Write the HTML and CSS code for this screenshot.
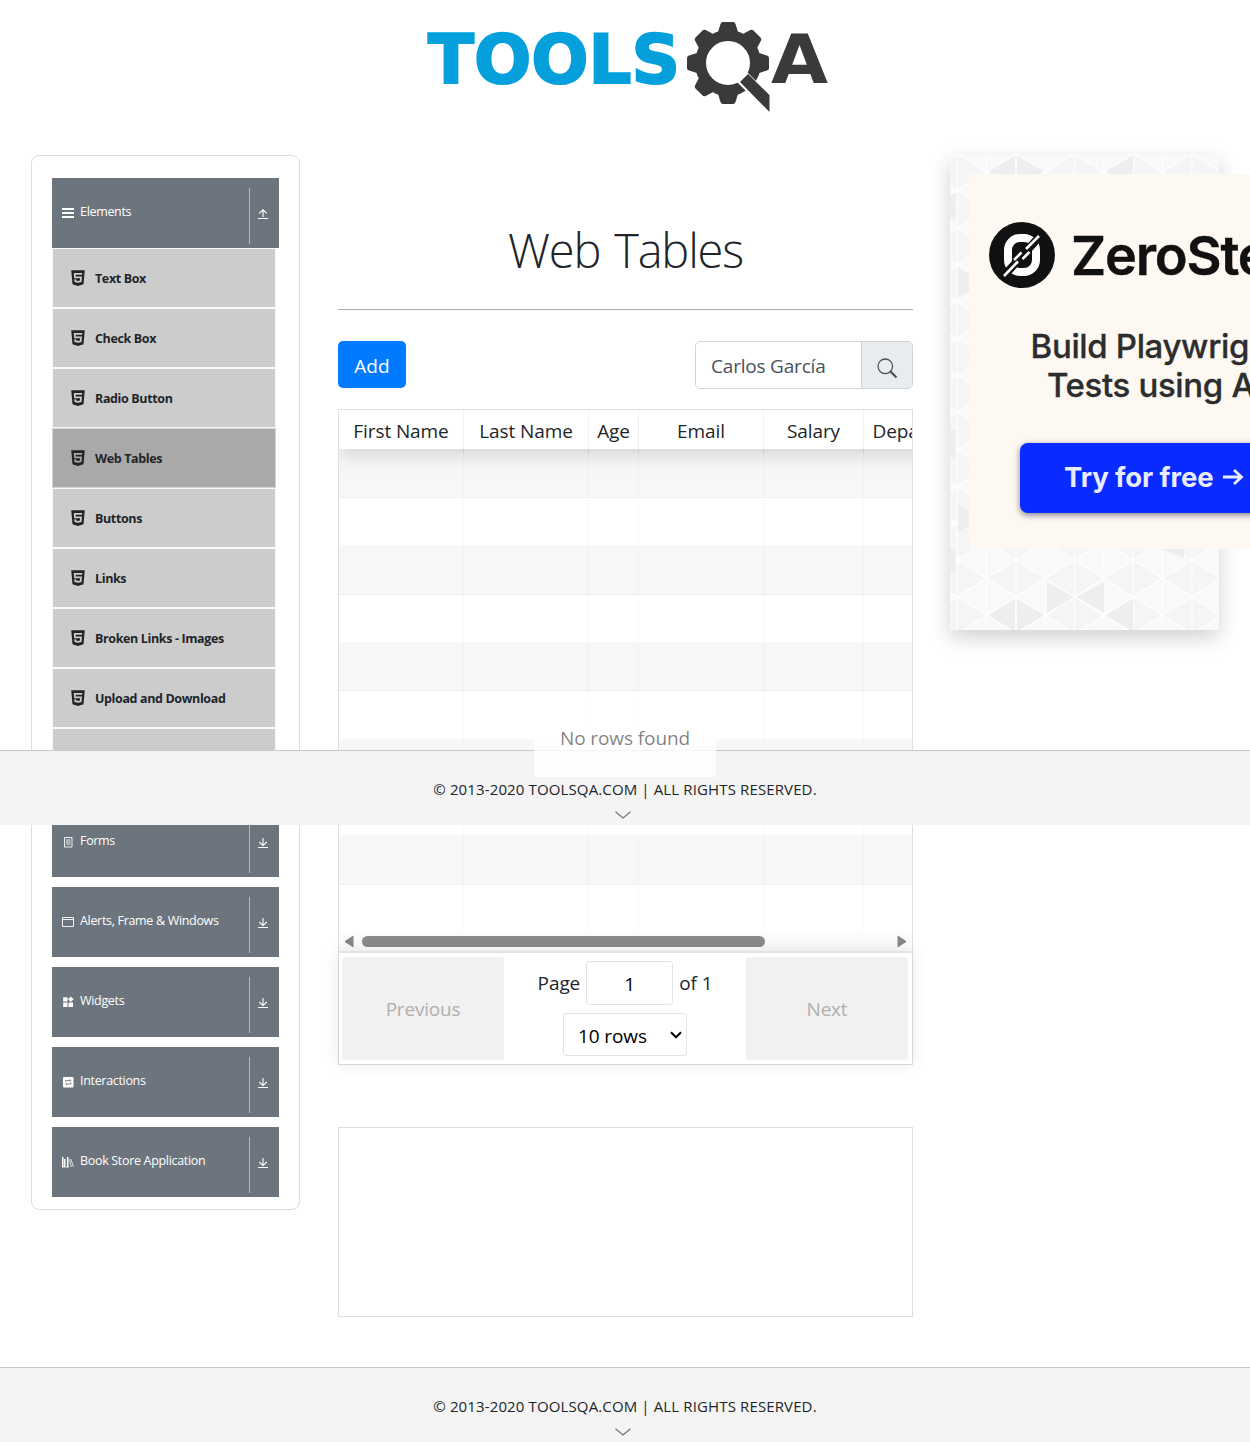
FILE: index.html
```
<!DOCTYPE html>
<html lang="en">
<head>
<meta charset="utf-8">
<title>Web Tables</title>
<link rel="stylesheet" href="styles.css">
</head>
<body>
<svg class="defs" width="0" height="0">
  <symbol id="html5" viewBox="0 0 512 512"><path d="M64 32l34.94 403.21L255.77 480 413 435.15 448 32zm308 132H188l4 51h176l-13.51 151.39L256 394.48l-98.68-28-6.78-77.48h48.26l3.42 39.29L256 343.07l53.42-14.92L315 264H148l-12.59-149.59H376.2z"/></symbol>
  <symbol id="down" viewBox="0 0 10 11"><path d="M5 0v7.4M1.2 4L5 7.6 8.8 4M0 9.5h10" fill="none" stroke="currentColor" stroke-width="1.1"/></symbol>
  <symbol id="up" viewBox="0 0 10 11"><path d="M5 8V1M1.2 4.3L5 .8l3.8 3.5M0 9.500h10" fill="none" stroke="currentColor" stroke-width="1.1"/></symbol>
  <symbol id="chevron" viewBox="0 0 16 8"><path d="M.5.7L8 6.9 15.5.7" fill="none" stroke="currentColor" stroke-width="1.3"/></symbol>
</svg>
<div class="page">
  <header class="top">
    <svg class="logo" viewBox="0 0 410 100" role="img" aria-label="TOOLSQA">
      <text class="logo-blue" x="6" y="66" textLength="252" lengthAdjust="spacingAndGlyphs">TOOLS</text>
      <g transform="translate(306 46)">
        <g class="logo-dark">
          <circle r="27.5" fill="none" stroke="#3a3a3b" stroke-width="11"/>
          <path id="tooth" d="M-10-31l2.500-8q.5-2 2.500-2H5q2 0 2.500 2l2.500 8z"/>
          <use href="#tooth" transform="rotate(45)"/><use href="#tooth" transform="rotate(90)"/>
          <use href="#tooth" transform="rotate(180)"/><use href="#tooth" transform="rotate(225)"/>
          <use href="#tooth" transform="rotate(270)"/><use href="#tooth" transform="rotate(315)"/>
        </g>
        <path d="M9 19L18 8l26 26v20z" fill="#fff"/>
        <path class="logo-dark" d="M12 19l8-8 21.500 21v17z"/>
      </g>
      <text class="logo-black" x="349" y="66" textLength="57" lengthAdjust="spacingAndGlyphs">A</text>
    </svg>
  </header>

  <div class="layout">
    <aside class="sidebar">
      <section class="group open">
        <div class="group-head">
          <svg class="gi" viewBox="0 0 12 12"><path d="M0 1h12v2H0zM0 5h12v2H0zM0 9h12v2H0z"/></svg>
          <span class="label">Elements</span><span class="toggle"><svg><use href="#up"/></svg></span>
        </div>
        <ul class="items">
          <li><svg><use href="#html5"/></svg><span>Text Box</span></li>
          <li><svg><use href="#html5"/></svg><span>Check Box</span></li>
          <li><svg><use href="#html5"/></svg><span>Radio Button</span></li>
          <li class="active"><svg><use href="#html5"/></svg><span>Web Tables</span></li>
          <li><svg><use href="#html5"/></svg><span>Buttons</span></li>
          <li><svg><use href="#html5"/></svg><span>Links</span></li>
          <li><svg><use href="#html5"/></svg><span>Broken Links - Images</span></li>
          <li><svg><use href="#html5"/></svg><span>Upload and Download</span></li>
          <li></li>
        </ul>
      </section>
      <section class="group"><div class="group-head">
        <svg class="gi" viewBox="0 0 12 12"><path d="M2.500 1.500h7.500v9.500H2.500zM4 4h4.500M4 6h4.500M4 8h4.500" fill="none" stroke="currentColor" stroke-width=".9"/></svg>
        <span class="label">Forms</span><span class="toggle"><svg><use href="#down"/></svg></span></div></section>
      <section class="group"><div class="group-head">
        <svg class="gi" viewBox="0 0 12 12"><path d="M.5 1.500h11v9H.5zM.5 3.500h11" fill="none" stroke="currentColor" stroke-width=".9"/></svg>
        <span class="label">Alerts, Frame &amp; Windows</span><span class="toggle"><svg><use href="#down"/></svg></span></div></section>
      <section class="group"><div class="group-head">
        <svg class="gi" viewBox="0 0 12 12"><path d="M1.200 1.200h4.300v4.300H1.200zM1.200 6.500h4.300v4.500H1.200zM6.500 6.500H11V11H6.500zM8.800.5l2.800 2.800-2.800 2.800L6 3.300z"/></svg>
        <span class="label">Widgets</span><span class="toggle"><svg><use href="#down"/></svg></span></div></section>
      <section class="group"><div class="group-head">
        <svg class="gi" viewBox="0 0 12 12"><rect x="1" y="1" width="10.500" height="10.500" rx="1"/><path d="M3.500 6V4.500h5M7.500 3.200l1.300 1.300-1.300 1.300M9 6.500V8H4M5 6.700L3.700 8 5 9.300" fill="none" stroke="#6c757d" stroke-width=".8"/></svg>
        <span class="label">Interactions</span><span class="toggle"><svg><use href="#down"/></svg></span></div></section>
      <section class="group"><div class="group-head">
        <svg class="gi" viewBox="0 0 12 12"><path d="M.7 1v10M2.700 3v8M5.700 1v10" fill="none" stroke="currentColor" stroke-width="1.500"/><path d="M0 11h7M7.500 3.500L9.300 11M8.800 3l2.700 8" fill="none" stroke="currentColor" stroke-width=".8"/></svg>
        <span class="label">Book Store Application</span><span class="toggle"><svg><use href="#down"/></svg></span></div></section>
    </aside>

    <main class="content">
      <h1>Web Tables</h1>
      <div class="toolbar">
        <button class="add">Add</button>
        <div class="search">
          <span class="search-text">Carlos García</span>
          <span class="search-btn"><svg viewBox="0 0 21 21"><circle cx="8.300" cy="8.300" r="7.300" fill="none" stroke="currentColor" stroke-width="1.300"/><path d="M13.200 13.200l6.300 6.300" stroke="currentColor" stroke-width="2.200" fill="none"/></svg></span>
        </div>
      </div>
      <div class="table">
        <div class="scroller">
          <div class="row head"><div>First Name</div><div>Last Name</div><div>Age</div><div>Email</div><div>Salary</div><div>Department</div></div>
          <div class="row"><div></div><div></div><div></div><div></div><div></div><div></div></div>
          <div class="row"><div></div><div></div><div></div><div></div><div></div><div></div></div>
          <div class="row"><div></div><div></div><div></div><div></div><div></div><div></div></div>
          <div class="row"><div></div><div></div><div></div><div></div><div></div><div></div></div>
          <div class="row"><div></div><div></div><div></div><div></div><div></div><div></div></div>
          <div class="row"><div></div><div></div><div></div><div></div><div></div><div></div></div>
          <div class="row"><div></div><div></div><div></div><div></div><div></div><div></div></div>
          <div class="row"><div></div><div></div><div></div><div></div><div></div><div></div></div>
          <div class="row"><div></div><div></div><div></div><div></div><div></div><div></div></div>
          <div class="row"><div></div><div></div><div></div><div></div><div></div><div></div></div>
          <div class="scrollbar">
            <svg viewBox="0 0 10 13"><path d="M9 1.500v10q0 1-1 .5L.8 7.300q-.8-.7 0-1.500L8 1q1-.5 1 .5z"/></svg>
            <div class="track"><div class="thumb"></div></div>
            <svg viewBox="0 0 10 13"><path d="M1 1.500v10q0 1 1 .5l7.200-4.700q.8-.7 0-1.500L2 1Q1 .5 1 1.500z"/></svg>
          </div>
        </div>
        <div class="pager">
          <div class="pbtn">Previous</div>
          <div class="pmid">
            <div class="pline"><span>Page</span><span class="pinput">1</span><span>of 1</span></div>
            <div class="pselect"><span>10 rows</span><svg viewBox="0 0 12 8"><path d="M1 1.300l5 5 5-5" fill="none" stroke="#000" stroke-width="2"/></svg></div>
          </div>
          <div class="pbtn">Next</div>
        </div>
        <div class="norows">No rows found</div>
      </div>
      <div class="blank"></div>
    </main>

    <aside class="promo">
      <svg class="facets" viewBox="0 0 269 476">
        <defs><pattern id="tri" x="7.300" y="-.3" width="58.600" height="36.940" patternUnits="userSpaceOnUse">
          <path d="M29.300 18.470L58.600 0v36.940zM0 0l29.300 18.470L0 36.940z" fill="#f5f5f5"/>
          <path d="M0 0l58.600 36.940M0 36.940L58.600 0M0 0v36.940M58.600 0v36.940M29.300 0v36.940" stroke="#fff" stroke-width="1.200" fill="none"/>
        </pattern></defs>
        <rect width="269" height="476" fill="#f9f9f9"/>
        <rect width="269" height="476" fill="url(#tri)"/>
        <g fill="#eee">
          <path d="M39 461l26-16v32zM67 445l27 16-27 16zM156 461l27-16v32zM97 428v31l27-16zM127 443l27-15v31zM211 395l23 9v-9z"/>
          <path d="M39 17L65 2v31zM67 2l27 15-27 16zM156 17l27-15v31zM8 113l12 8v15l-12 7zM0 276h6v29l-6-3zM8 350l12 8v14l-12 7zM0 394l6 3v22l-6-3zM0 41l6-2v27l-6-3z"/>
        </g>
      </svg>
      <div class="ad">
        <div class="brand">
          <svg viewBox="0 0 66 66"><circle cx="33" cy="33" r="33" fill="#111"/><rect x="19" y="16" width="28" height="34" rx="12" fill="none" stroke="#fff" stroke-width="8"/><path d="M13 56L52 13" stroke="#111" stroke-width="8"/><path d="M15 54l14-14.500M37 27l13-13M25 38l7.500-7.500M33.500 37l7-7" stroke="#fff" stroke-width="2.600" fill="none"/></svg>
          <span>ZeroStep</span>
        </div>
        <p class="pitch">Build Playwright<br>Tests using AI</p>
        <div class="cta">Try for free <svg viewBox="0 0 22 18"><path d="M1 9h19M12 2l7.500 7L12 16" fill="none" stroke="#e9ecff" stroke-width="2.800"/></svg></div>
      </div>
    </aside>
  </div>

  <footer class="foot"><span>© 2013-2020 TOOLSQA.COM | ALL RIGHTS RESERVED.</span><svg><use href="#chevron"/></svg></footer>
  <div class="foot floating"><span>© 2013-2020 TOOLSQA.COM | ALL RIGHTS RESERVED.</span><svg><use href="#chevron"/></svg></div>
</div>
</body>
</html>
```
FILE: styles.css
```
* { box-sizing: border-box; }
body { margin: 0; background: #fff; color: #212529; font-family: "Open Sans", "Noto Sans", sans-serif; font-size: 19px; letter-spacing: -.1px; }
svg { display: block; fill: currentColor; flex: none; }
.defs { position: absolute; }
.page { position: relative; width: 1250px; height: 1442px; overflow: hidden; display: flex; flex-direction: column; }

.top { height: 154px; flex: none; padding: 17px 0 0 422px; }
.logo { width: 410px; height: 100px; }
.logo text { font-family: "DejaVu Sans", sans-serif; font-weight: 700; font-size: 67px; letter-spacing: 0; }
.logo-blue { fill: #05a0dc; stroke: #05a0dc; stroke-width: 2px; }
.logo-dark, .logo-black { fill: #3a3a3b; }

.layout { display: grid; grid-template-columns: 269px 575px 269px; column-gap: 38px; padding-left: 31px; height: 1213px; flex: none; align-items: start; }

.sidebar { margin-top: 1px; height: 1055px; border: 1px solid #dcdddf; border-radius: 8px; padding: 22px 20px 0; font-size: 12.5px; letter-spacing: -.32px; }
.group { margin-bottom: 10px; }
.group.open { margin-bottom: 19px; }
.group-head { height: 70px; background: #6c757d; color: #fff; display: flex; align-items: center; padding-left: 10px; }
.gi { width: 12px; height: 12px; margin-right: 6px; }
.label { flex: 1; padding-bottom: 4px; }
.toggle { align-self: flex-start; width: 30px; height: 56px; margin-top: 10px; border-left: 1px solid #bbb9b5; display: flex; align-items: center; padding-left: 8px; }
.toggle svg { width: 10px; height: 11px; margin-bottom: 3px; }
.items { list-style: none; margin: 0; padding: 0; width: 224px; font-weight: 700; letter-spacing: -.37px; }
.items li { height: 60px; background: #ccc; border: 1px solid #f8f9fa; display: flex; align-items: center; padding-left: 17px; }
.items li.active { background: #a9a9a9; border-color: #d3d6d9; }
.items svg { width: 18px; height: 18px; margin-right: 8px; margin-left: -1px; }

h1 { margin: 0; height: 156px; padding-top: 66px; border-bottom: 1px solid #aaabac; text-align: center; font-weight: 300; font-size: 47px; line-height: 61px; letter-spacing: -1.2px; word-spacing: 3px; }
.toolbar { display: flex; justify-content: space-between; padding-top: 31px; height: 99px; }
.add { width: 68px; height: 47px; border: 0; border-radius: 5px; background: #007bff; color: #fff; font: inherit; padding: 2px 0 0; }
.search { display: flex; width: 218px; height: 48px; border: 1px solid #ced4da; border-radius: 5px; color: #495057; overflow: hidden; line-height: 48px; letter-spacing: -.2px; }
.search-text { width: 166px; padding-left: 15px; border-right: 1px solid #ced4da; }
.search-btn { flex: 1; background: #e9ecef; display: flex; align-items: center; justify-content: center; }
.search-btn svg { width: 21px; height: 21px; margin-top: 6px; }

.table { position: relative; height: 656px; border: 1px solid #dfdfdf; }
.scroller { overflow: hidden; }
.row { display: grid; grid-template-columns: 125px 125px 50px 125px 100px 125px; width: 650px; height: 48.350px; border-bottom: 1px solid rgba(0,0,0,.03); }
.row:nth-child(2) { height: 49px; }
.row:nth-child(11) { height: 47.200px; border-bottom: 0; }
.row > div { border-right: 1px solid rgba(0,0,0,.02); }
.row:nth-child(even) { background: #f7f7f7; }
.row.head { position: relative; height: 39px; border: 0; box-shadow: 0 4px 22px rgba(0,0,0,.17); text-align: center; line-height: 43px; white-space: nowrap; }
.row.head > div { border-right-color: rgba(0,0,0,.06); }
.scrollbar { height: 19px; background: #fbfbfb; color: #878787; display: flex; align-items: center; padding: 0 5px; }
.scrollbar svg { width: 11px; height: 13px; }
.track { flex: 1; padding: 0 7px; }
.thumb { width: 403px; height: 11px; border-radius: 6px; background: #8a8a8a; }
.scroller { height: 541px; }
.pager { position: relative; height: 113px; border-top: 2px solid #e3e3e3; background: #fff; box-shadow: 0 0 15px rgba(0,0,0,.1); display: flex; justify-content: space-between; padding: 4px 4px 4px 3px; }
.pbtn { width: 162px; height: 103px; background: #f1f1f1; border-radius: 3px; color: #afafaf; text-align: center; line-height: 104px; letter-spacing: -.2px; }
.pmid { padding-top: 4px; display: flex; flex-direction: column; align-items: center; gap: 8px; }
.pline { display: flex; align-items: center; gap: 6px; height: 44px; line-height: 46px; }
.pinput { width: 87px; height: 44px; border: 1px solid #e4e4e4; border-radius: 3px; text-align: center; line-height: 44px; color: #000; }
.pselect { width: 124px; height: 43px; border: 1px solid #e4e4e4; border-radius: 3px; display: flex; align-items: center; justify-content: space-between; padding: 0 4px 0 14px; color: #000; }
.pselect span { padding-top: 2px; }
.pselect svg { width: 12px; height: 8px; }
.norows { position: absolute; z-index: 3; left: 195px; top: 287px; width: 182px; height: 80px; line-height: 82px; text-align: center; background: rgba(255,255,255,.8); color: rgba(0,0,0,.5); }
.blank { margin-top: 62px; height: 190px; border: 1px solid #dfdfdf; }

.promo { width: 269px; height: 476px; margin-left: -1px; box-shadow: 0 8px 20px rgba(0,0,0,.18); display: grid; font-family: Inter, sans-serif; letter-spacing: 0; }
.facets, .ad { grid-area: 1 / 1; }
.facets { width: 269px; height: 476px; }
.ad { margin: 20px 0 0 19px; width: 450px; height: 375px; background: #fdf8f2; padding: 48px 0 0 20px; }
.brand { display: flex; align-items: center; gap: 17px; height: 66px; font-weight: 600; font-size: 54px; line-height: 66px; color: #111; letter-spacing: -1.2px; }
.brand svg { width: 66px; height: 66px; }
.brand span { padding-top: 2px; margin-left: -1px; -webkit-text-stroke: .4px #111; }
.pitch { margin: 39px 0 0 -10px; width: 352px; text-align: center; font-size: 33px; line-height: 39px; font-weight: 500; color: #2d2d2d; letter-spacing: -.35px; -webkit-text-stroke: .3px #2d2d2d; }
.cta { margin: 38px 0 0 31px; width: 350px; height: 70px; background: #0a2bff; border-radius: 8px; box-shadow: 0 2px 6px rgba(0,0,40,.5); color: #e9ecff; font-size: 27.500px; font-weight: 700; display: flex; align-items: center; padding: 0 0 2px 44px; gap: 9px; letter-spacing: -.1px; }
.cta svg { width: 22px; height: 18px; }

.foot { height: 75px; width: 1250px; flex: none; background: #f4f4f4; border-top: 1px solid #c9c9c9; display: flex; flex-direction: column; align-items: center; padding-top: 27px; font-size: 15px; line-height: 23px; letter-spacing: .13px; }
.foot svg { width: 16px; height: 8px; margin: 10px 4px 0 0; color: #777; }
.floating { position: absolute; z-index: 2; left: 0; top: 750px; }
```
